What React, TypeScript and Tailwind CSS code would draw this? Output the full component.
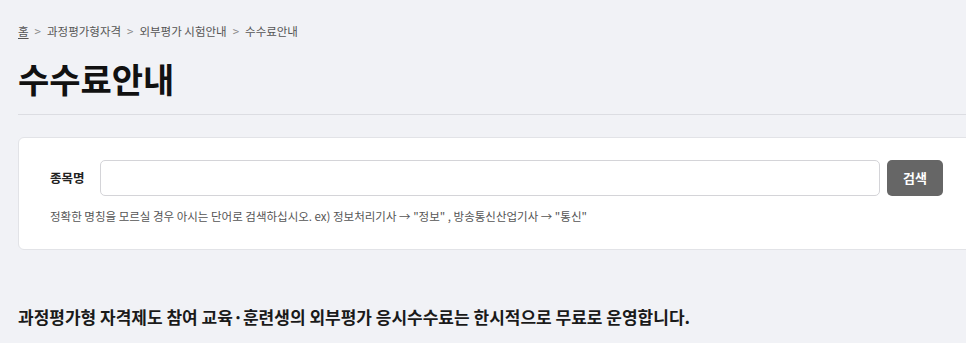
export default function App() {
  return (
    <div className="min-h-[343px] w-[966px] overflow-hidden bg-[#f1f2f6] pl-[18px] font-['Noto_Sans_CJK_KR','Noto_Sans',sans-serif] text-[#222]">
      <div className="w-[957px]">
        <nav className="flex items-center gap-[6px] pt-[24px] text-[11.5px] leading-[14px] text-[#555]">
          <span className="underline underline-offset-2">홈</span>
          <span className="text-[#888]">&gt;</span>
          <span>과정평가형자격</span>
          <span className="text-[#888]">&gt;</span>
          <span>외부평가 시험안내</span>
          <span className="text-[#888]">&gt;</span>
          <span>수수료안내</span>
        </nav>

        <h1 className="mt-[20px] text-[34px] font-bold leading-[42px] text-[#111]">수수료안내</h1>

        <div className="mt-[14px] h-px bg-[#dcdde2]" />

        <div className="mt-[22px] rounded-[6px] border border-[#e2e3e7] bg-white px-[31px] pt-[22px] pb-[25px]">
          <div className="flex items-center gap-[7px]">
            <span className="w-[43px] text-[12.5px] font-bold text-[#222]">종목명</span>
            <input className="h-[36px] flex-1 rounded-[5px] border border-[#d4d4d8] bg-white px-3 outline-none" />
            <button className="h-[36px] w-[56px] rounded-[5px] bg-[#666] text-[13px] font-bold text-white">검색</button>
          </div>
          <p className="mt-[12px] text-[11.5px] leading-[16px] text-[#555]">
            정확한 명칭을 모르실 경우 아시는 단어로 검색하십시오. ex) 정보처리기사 → "정보" , 방송통신산업기사 → "통신"
          </p>
        </div>

        <p className="mt-[55px] text-[17px] font-bold leading-[24px] text-[#1a1a1a]">
          과정평가형 자격제도 참여 교육·훈련생의 외부평가 응시수수료는 한시적으로 무료로 운영합니다.
        </p>
      </div>
    </div>
  );
}
